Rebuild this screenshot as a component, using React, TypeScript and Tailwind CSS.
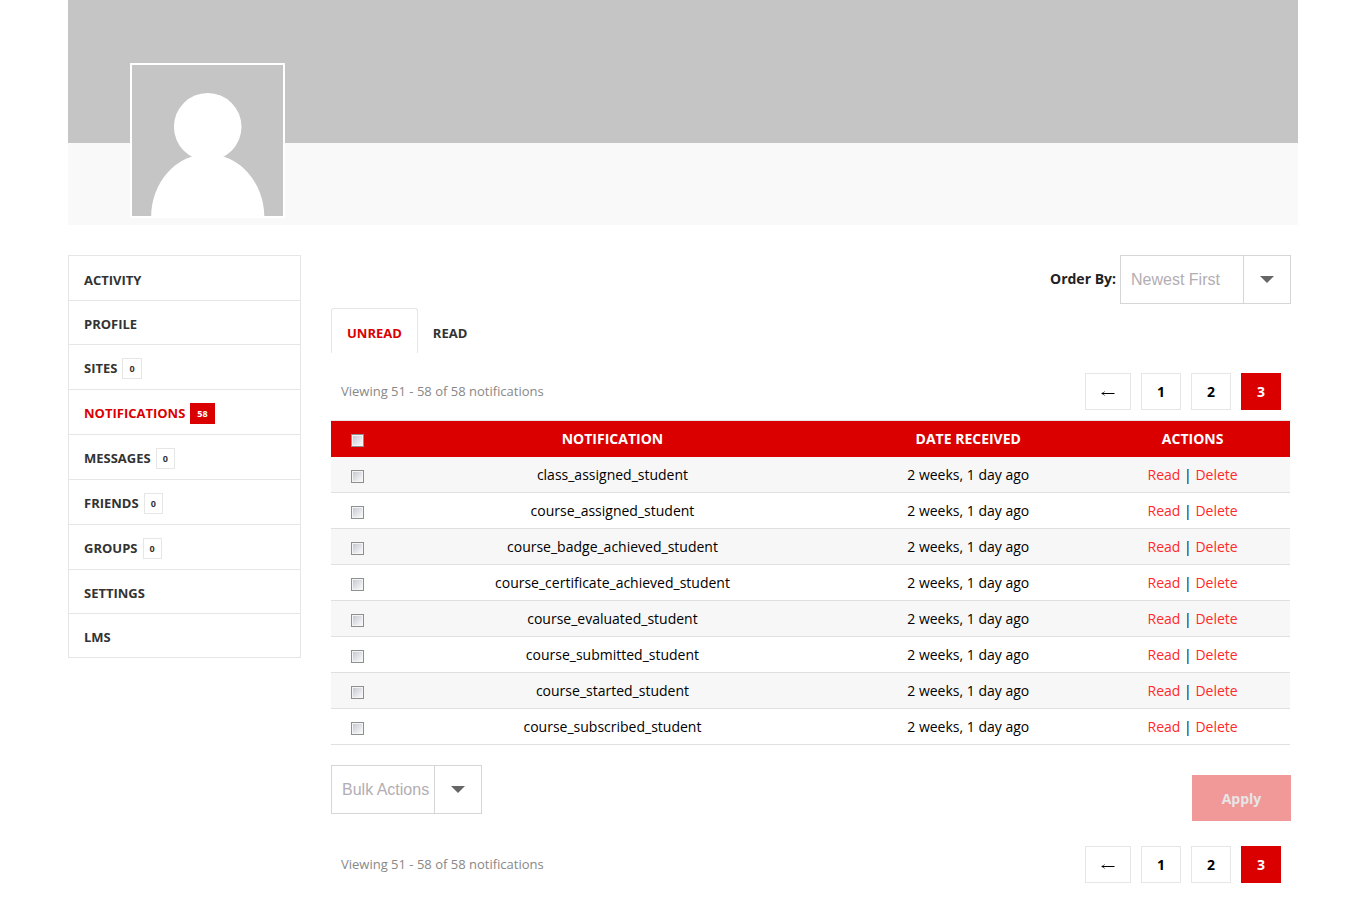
import { useState } from "react";
import clsx from "clsx";

const navItems = [
  { label: "Activity" },
  { label: "Profile" },
  { label: "Sites", count: 0 },
  { label: "Notifications", count: 58, active: true },
  { label: "Messages", count: 0 },
  { label: "Friends", count: 0 },
  { label: "Groups", count: 0 },
  { label: "Settings" },
  { label: "LMS" },
];

const notifications = [
  "class_assigned_student",
  "course_assigned_student",
  "course_badge_achieved_student",
  "course_certificate_achieved_student",
  "course_evaluated_student",
  "course_submitted_student",
  "course_started_student",
  "course_subscribed_student",
];

const checkboxClass =
  "block mx-auto mt-[3px] size-[13px] appearance-none border border-[#8e8f8f] bg-linear-to-br from-[#c0c4ce] to-[#ffffff] shadow-[inset_0_0_0_1px_#f4f4f4] checked:from-[#555] checked:to-[#777]";

function Avatar() {
  return (
    <svg
      viewBox="0 0 151 151"
      className="block size-[155px] border-2 border-white bg-[#c5c5c5]"
      aria-hidden="true"
    >
      <circle cx="75.7" cy="61.8" r="33.8" fill="#fff" />
      <ellipse cx="75.7" cy="152" rx="56.6" ry="63" fill="#fff" />
    </svg>
  );
}

function SideNav() {
  return (
    <nav className="w-[233px] shrink-0">
      <ul className="border-x border-t border-[#e6e6e6] pt-px">
        {navItems.map(({ label, count, active }) => (
          <li key={label} className="border-b border-[#e6e6e6]">
            <a
              href="#"
              className={clsx(
                "flex items-start gap-[5px] px-[15px] pt-[13px] pb-[10px] text-[13px] leading-5 font-bold uppercase",
                active ? "text-[#db0000]" : "text-[#333]"
              )}
            >
              {label}
              {count !== undefined && (
                <span
                  className={clsx(
                    "border px-[6px] text-[9px] leading-[19px] font-bold",
                    active
                      ? "border-[#db0000] bg-[#db0000] text-white"
                      : "border-[#e6e6e6]"
                  )}
                >
                  {count}
                </span>
              )}
            </a>
          </li>
        ))}
      </ul>
    </nav>
  );
}

type SelectProps = {
  id: string;
  label?: string;
  options: string[];
  className: string;
};

function Select({ id, label, options, className }: SelectProps) {
  return (
    <div className={clsx("relative h-[49px] border border-[#d6d6d6]", className)}>
      <select
        id={id}
        aria-label={label}
        className="size-full appearance-none bg-white pr-9 pl-[10px] font-['Liberation_Sans',Arial,sans-serif] text-base text-[#b3adb3] outline-none"
      >
        {options.map((option) => (
          <option key={option}>{option}</option>
        ))}
      </select>
      <span className="pointer-events-none absolute inset-y-0 right-0 flex w-[47px] items-center justify-center border-l border-[#d6d6d6]">
        <svg width="14" height="7" viewBox="0 0 14 7" aria-hidden="true">
          <path d="M0 0h14L7 7z" fill="#666" />
        </svg>
      </span>
    </div>
  );
}

function Pagination() {
  const linkClass =
    "flex h-[37px] items-center justify-center border text-sm font-bold";
  return (
    <div className="flex items-center justify-between px-[10px]">
      <p className="text-[13px] text-[#888]">Viewing 51 - 58 of 58 notifications</p>
      <div className="flex gap-[10px]">
        <a
          href="#"
          aria-label="Previous page"
          className={clsx(linkClass, "w-[46px] border-[#e6e6e6] text-black")}
        >
          <svg width="14" height="7" viewBox="0 0 14 7" className="mt-[3px]" aria-hidden="true">
            <path d="M1 3.5h12.5" stroke="currentColor" />
            <path
              d="M3.5 1.5C3 2.5 2.100 3.200.7 3.500C2.100 3.800 3 4.500 3.500 5.500"
              fill="none"
              stroke="currentColor"
              strokeWidth="0.8"
            />
          </svg>
        </a>
        <a href="#" className={clsx(linkClass, "w-10 border-[#e6e6e6] text-black")}>
          1
        </a>
        <a href="#" className={clsx(linkClass, "w-10 border-[#e6e6e6] text-black")}>
          2
        </a>
        <span
          aria-current="page"
          className={clsx(linkClass, "w-10 border-[#db0000] bg-[#db0000] text-white")}
        >
          3
        </span>
      </div>
    </div>
  );
}

function NotificationsTable() {
  const [selected, setSelected] = useState<string[]>([]);
  const allSelected = selected.length === notifications.length;

  const toggle = (name: string) => {
    setSelected((prev) =>
      prev.includes(name) ? prev.filter((n) => n !== name) : [...prev, name]
    );
  };

  return (
    <table className="mt-[10px] w-full table-fixed border-separate border-spacing-0 border-t border-[#e6e6e6] pr-px text-center text-sm">
      <colgroup>
        <col className="w-[5.5%]" />
        <col className="w-[47.7%]" />
        <col className="w-[26.5%]" />
        <col className="w-[20.3%]" />
      </colgroup>
      <thead>
        <tr className="h-9 bg-[#db0000] font-bold text-white uppercase">
          <th>
            <input
              type="checkbox"
              aria-label="Select all"
              className={checkboxClass}
              checked={allSelected}
              onChange={() => setSelected(allSelected ? [] : notifications)}
            />
          </th>
          <th>Notification</th>
          <th>Date Received</th>
          <th>Actions</th>
        </tr>
      </thead>
      <tbody className="text-black [&_td]:border-b [&_td]:border-[#e0e0e0]">
        {notifications.map((name) => (
          <tr key={name} className="h-9 odd:bg-[#f7f7f7]">
            <td>
              <input
                type="checkbox"
                aria-label={name}
                className={checkboxClass}
                checked={selected.includes(name)}
                onChange={() => toggle(name)}
              />
            </td>
            <td>{name}</td>
            <td>2 weeks, 1 day ago</td>
            <td>
              <a href="#" className="text-[#ff2a2a]">
                Read
              </a>{" "}
              |{" "}
              <a href="#" className="text-[#ff2a2a]">
                Delete
              </a>
            </td>
          </tr>
        ))}
      </tbody>
    </table>
  );
}

export default function App() {
  return (
    <div className="bg-white pr-[73px] pb-6 pl-[68px] font-['Open_Sans',sans-serif]">
      <header className="bg-[#f9f9f9]">
        <div className="h-[143px] bg-[#c5c5c5]" />
        <div className="h-[82px] pl-[62px]">
          <div className="relative inline-block -mt-20">
            <Avatar />
          </div>
        </div>
      </header>

      <div className="mt-[30px] flex gap-[30px]">
        <SideNav />

        <main className="min-w-0 flex-1 pr-[7px]">
          <div className="flex items-center justify-end gap-1">
            <label htmlFor="order-by" className="pb-[2px] text-sm font-bold text-[#222]">
              Order By:
            </label>
            <Select
              id="order-by"
              options={["Newest First", "Oldest First"]}
              className="w-[171px]"
            />
          </div>

          <ul className="mt-1 flex text-[13px] font-bold uppercase">
            <li className="rounded-t-[3px] border-x border-t border-[#e6e6e6]">
              <a href="#" className="block px-[15px] pt-[14px] pb-[10px] leading-5 text-[#db0000]">
                Unread
              </a>
            </li>
            <li className="border-t border-transparent">
              <a href="#" className="block px-[15px] pt-[14px] pb-[10px] leading-5 text-[#333]">
                Read
              </a>
            </li>
          </ul>

          <div className="mt-5">
            <Pagination />
          </div>

          <NotificationsTable />

          <div className="mt-5 mb-[25px] flex justify-between">
            <Select
              id="bulk-action"
              label="Bulk Actions"
              options={["Bulk Actions", "Mark read", "Delete"]}
              className="w-[151px]"
            />
            <button
              type="button"
              disabled
              className="mt-[10px] h-[46px] w-[99px] bg-[#f19999] pt-[2px] text-sm font-bold text-[#e6e6e6]"
            >
              Apply
            </button>
          </div>

          <Pagination />
        </main>
      </div>
    </div>
  );
}
